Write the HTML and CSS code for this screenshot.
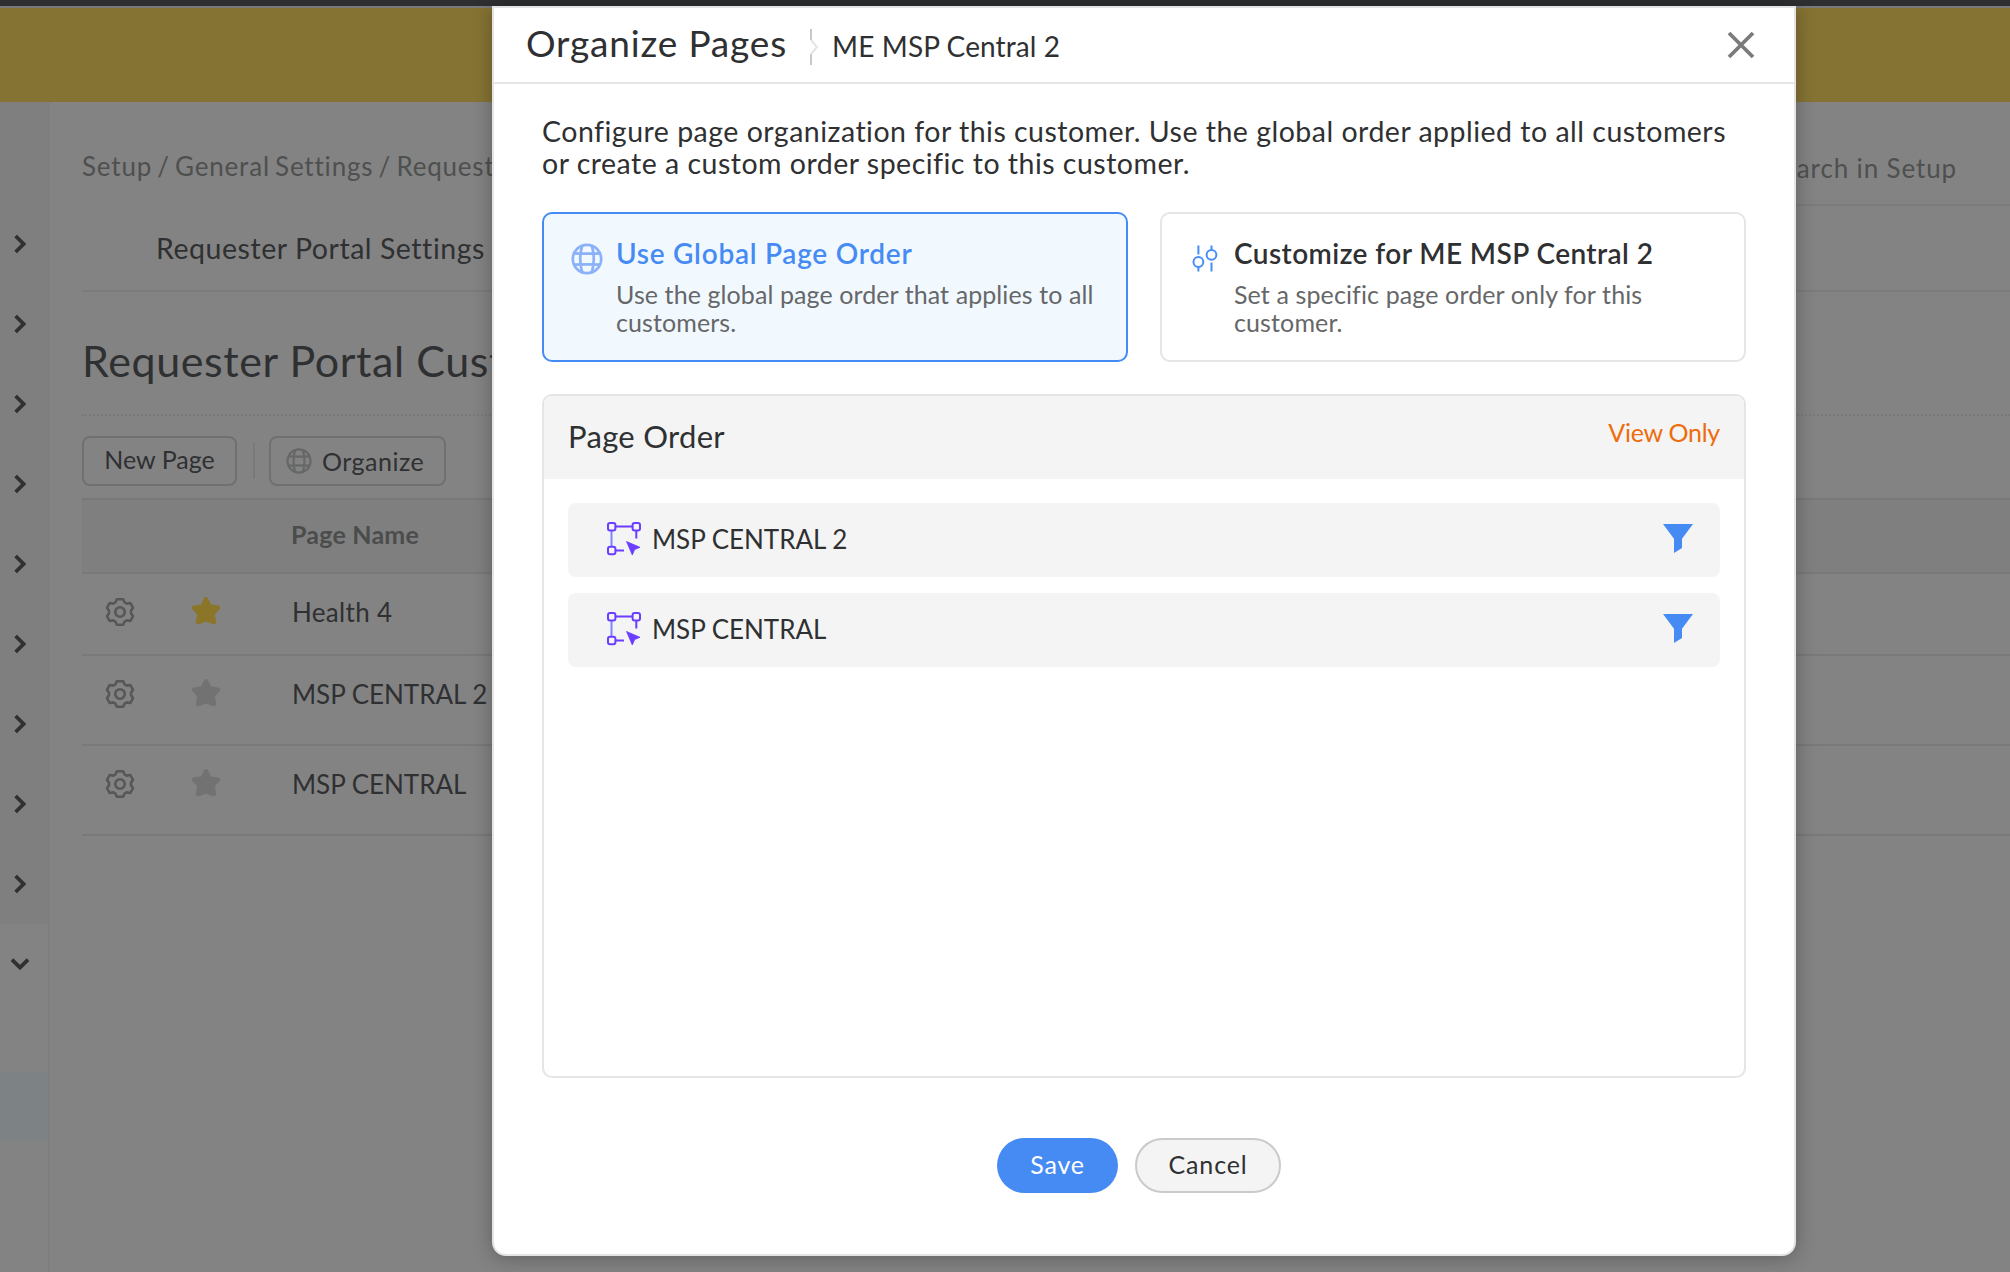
FILE: index.html
```html
<!DOCTYPE html>
<html lang="en">
<head>
<meta charset="utf-8">
<title>Organize Pages</title>
<link rel="stylesheet" href="styles.css">
</head>
<body>
<svg class="defs" width="0" height="0" aria-hidden="true">
  <symbol id="chev" viewBox="0 0 20 20"><path d="M5.6 2l8 8-8 8" fill="none" stroke="currentColor" stroke-width="3.8"/></symbol>
  <symbol id="globe" viewBox="-16 -16 32 32"><g fill="none" stroke="currentColor" stroke-width="2.7"><circle r="14.2"/><path d="M-4.6-14C-7.4-5-7.4 5-4.6 14M4.6-14C7.4-5 7.4 5 4.6 14M-13.4-5.6Q0-5 13.4-5.6M-13.4 5.6Q0 5 13.4 5.6"/></g></symbol>
  <symbol id="gear" viewBox="-15 -15 30 30"><g fill="none" stroke="currentColor" stroke-width="2.6" stroke-linejoin="round"><path d="M-3.2-12.8H3.2L4.6-9.6 6.8-8.4 10.4-9 13-4.2 11-1.2V1.2L13 4.2 10.4 9 6.8 8.4 4.6 9.6 3.2 12.8H-3.2L-4.6 9.6-6.8 8.4-10.4 9-13 4.2-11 1.2V-1.2L-13-4.2-10.4-9-6.8-8.4-4.6-9.6Z"/><circle r="4.8"/></g></symbol>
  <symbol id="star" viewBox="-15 -15 30 30"><path d="M0-11.6L3.4-4.6 11.8-3.2 6.4 2.6 7.8 11 0 8.2-7.8 11-6.4 2.6-11.8-3.2-3.4-4.6Z" fill="currentColor" stroke="currentColor" stroke-width="4.6" stroke-linejoin="round"/></symbol>
  <symbol id="nodes" viewBox="0 0 34 34"><g fill="none" stroke="#6a3dff" stroke-width="2"><path d="M4.5 9v15" stroke="#7d86ff"/><path d="M9 4.5h16M29.3 9v7.5M9 28.5h8"/><rect x="1" y="1" width="7.4" height="7.4" rx="2"/><rect x="25.6" y="1" width="7.4" height="7.4" rx="2"/><rect x="1" y="24.8" width="7.4" height="7.4" rx="2"/></g><path d="M19.5 19.5L33 25.3 27.6 27.6 25.3 33Z" fill="#6a3dff" stroke="#6a3dff" stroke-width=".8" stroke-linejoin="round"/></symbol>
  <symbol id="filter" viewBox="0 0 30 29"><path d="M0 0H30L19 14.7V24L11 29V14.7Z" fill="currentColor"/></symbol>
</svg>

<div class="strip"></div>
<header class="banner"></header>

<div class="page">
  <nav class="side">
    <div class="side-top">
      <span><svg><use href="#chev"/></svg></span><span><svg><use href="#chev"/></svg></span><span><svg><use href="#chev"/></svg></span>
      <span><svg><use href="#chev"/></svg></span><span><svg><use href="#chev"/></svg></span><span><svg><use href="#chev"/></svg></span>
      <span><svg><use href="#chev"/></svg></span><span><svg><use href="#chev"/></svg></span><span><svg><use href="#chev"/></svg></span>
    </div>
    <div class="side-open">
      <span class="open"><svg><use href="#chev"/></svg></span>
      <div class="current"></div>
    </div>
  </nav>

  <main class="main">
    <div class="topline">
      <div class="crumbs">Setup / General Settings / Requester</div>
      <div class="search">Search in Setup</div>
    </div>
    <div class="tabs">Requester Portal Settings</div>
    <h1 class="title">Requester Portal Customization</h1>
    <div class="tools">
      <button class="btn new">New Page</button>
      <i class="bar"></i>
      <button class="btn org"><svg><use href="#globe"/></svg>Organize</button>
    </div>
    <div class="row head"><span></span><span></span><span>Page Name</span></div>
    <div class="row first"><svg class="gear"><use href="#gear"/></svg><svg class="star on"><use href="#star"/></svg><span>Health 4</span></div>
    <div class="row"><svg class="gear"><use href="#gear"/></svg><svg class="star"><use href="#star"/></svg><span>MSP CENTRAL 2</span></div>
    <div class="row"><svg class="gear"><use href="#gear"/></svg><svg class="star"><use href="#star"/></svg><span>MSP CENTRAL</span></div>
  </main>
</div>

<section class="modal">
  <div class="m-head">
    <h2>Organize Pages</h2>
    <svg class="sep" viewBox="0 0 10 36"><path d="M2 0v11M2 25v11" stroke="#c8c8cc" stroke-width="2"/><path d="M2 11l6 7-6 7" fill="none" stroke="#e4e4e6" stroke-width="2"/></svg>
    <span class="who">ME MSP Central 2</span>
    <svg class="close" viewBox="0 0 28 28"><path d="M2 2l24 24M26 2L2 26" stroke="#7b7b7b" stroke-width="3.8"/></svg>
  </div>
  <div class="m-body">
    <p class="intro">Configure page organization for this customer. Use the global order applied to all customers<br>or create a custom order specific to this customer.</p>
    <div class="cards">
      <div class="card on">
        <svg class="ic"><use href="#globe"/></svg>
        <div><h3>Use Global Page Order</h3><p>Use the global page order that applies to all customers.</p></div>
      </div>
      <div class="card custom">
        <svg class="ic" viewBox="-16 -16 32 32"><g fill="none" stroke="#478ef7" stroke-width="2"><path d="M-6.6-13.5V-4.5M-6.6 8.3V12.5M6.5-13.5V-9.3M6.5 3.5V12.5"/><circle cx="-6.6" cy="3" r="4.9"/><circle cx="6.5" cy="-4.2" r="4.9"/></g></svg>
        <div><h3>Customize for ME MSP Central 2</h3><p>Set a specific page order only for this customer.</p></div>
      </div>
    </div>
    <div class="panel">
      <div class="p-head"><h3>Page Order</h3><span>View Only</span></div>
      <div class="p-list">
        <div class="item"><svg class="nodes"><use href="#nodes"/></svg><span>MSP CENTRAL 2</span><svg class="filter"><use href="#filter"/></svg></div>
        <div class="item"><svg class="nodes"><use href="#nodes"/></svg><span>MSP CENTRAL</span><svg class="filter"><use href="#filter"/></svg></div>
      </div>
    </div>
    <div class="actions"><button class="save">Save</button><button class="cancel">Cancel</button></div>
  </div>
</section>
</body>
</html>
```

FILE: styles.css
```css
* { box-sizing: border-box; }
body {
  margin: 0;
  width: 2010px;
  height: 1272px;
  overflow: hidden;
  position: relative;
  background: #838383;
  color: #2f3032;
  font-family: Lato, "Liberation Sans", sans-serif;
}
h1, h2, h3, p { margin: 0; font-weight: 400; }
button { font: inherit; color: inherit; background: none; padding: 0; }
svg { display: block; flex: none; }
.defs { position: absolute; }

.strip { height: 6px; background: #2e2f31; }
.banner { height: 96px; background: #857333; border-top: 2px solid #7b7a7d; }

.page { display: flex; height: 1170px; }

/* Sidebar */
.side { width: 50px; flex: none; display: flex; flex-direction: column; }
.side-top { background: #7f7f7f; padding-top: 102px; }
.side span { display: flex; align-items: center; height: 80px; padding-left: 10px; }
.side svg { width: 20px; height: 20px; }
.side-open { flex: 1; border-right: 2px solid #7f7f7f; }
.side .open svg { transform: rotate(90deg); }
.current { height: 68px; margin-top: 68px; background: #7d8285; }

/* Main */
.main { flex: 1; min-width: 0; padding-left: 32px; white-space: nowrap; }
.topline { display: flex; justify-content: space-between; height: 104px; font-size: 26px; line-height: 32px; color: #4e504f; }
.crumbs { width: 412px; overflow: hidden; padding-top: 48px; letter-spacing: .8px; word-spacing: -2.2px; }
.search { width: 320px; padding: 50px 53px 0 0; text-align: right; letter-spacing: .87px; border-bottom: 2px solid #7b7b7b; }
.tabs { height: 86px; line-height: 84px; padding-left: 74px; font-size: 28.5px; letter-spacing: .54px; border-bottom: 2px solid #7b7b7b; }
.title { height: 124px; line-height: 106px; padding-top: 16px; font-size: 43px; letter-spacing: .6px; border-bottom: 2px dotted #797979; }
.tools { display: flex; height: 82px; padding: 20px 0 12px; font-size: 25px; }
.btn { height: 50px; border: 2px solid #707070; border-radius: 8px; }
.new { width: 155px; line-height: 42px; padding-bottom: 4px; letter-spacing: .05px; }
.bar { width: 2px; height: 36px; margin: 7px 14px 0 16px; background: #797979; }
.org { width: 177px; display: flex; align-items: center; padding-left: 15px; letter-spacing: .5px; }
.org svg { width: 26px; height: 26px; margin-right: 10px; color: #666768; }

.row { display: grid; grid-template-columns: 76px 86px 1fr; height: 90px; padding-top: 22px; font-size: 26px; line-height: 32px; letter-spacing: -.03px; border-bottom: 2px solid #797979; }
.row span { padding-left: 48px; }
.first { height: 82px; letter-spacing: .33px; }
.head { height: 76px; padding-top: 18px; background: #7f7f7f; border-top: 2px solid #787878; font-size: 25px; font-weight: 700; letter-spacing: .22px; color: #4b4d4c; }
.head span { padding-left: 47px; }
.gear { width: 30px; height: 30px; margin: 1px 0 0 23px; color: #565757; }
.star { width: 30px; height: 30px; margin: 0 0 0 33px; color: #727272; }
.on.star { color: #8a7528; }

/* Modal */
.modal {
  position: absolute;
  left: 492px;
  top: 6px;
  width: 1304px;
  height: 1250px;
  background: #fff;
  border: 2px solid #e4e4e4;
  border-radius: 0 0 14px 14px;
  box-shadow: 0 2px 20px rgba(0, 0, 0, .28);
}
.m-head { display: flex; align-items: center; height: 76px; padding: 0 39px 0 32px; border-bottom: 2px solid #e5e5e5; }
.m-head h2 { font-size: 37px; line-height: 44px; padding-bottom: 4px; letter-spacing: .84px; }
.sep { width: 10px; height: 36px; margin: 4px 0 0 22px; }
.who { font-size: 28px; line-height: 34px; padding-top: 2px; margin-left: 13px; letter-spacing: .11px; }
.close { width: 28px; height: 28px; margin-left: auto; }

.m-body { padding: 31px 48px 0; }
.intro { font-size: 28.5px; line-height: 32px; letter-spacing: .49px; white-space: nowrap; margin-bottom: 33px; }
.cards { display: grid; grid-template-columns: 1fr 1fr; gap: 32px; }
.card { display: flex; height: 150px; padding: 22px 26px 0 27px; border: 2px solid #e5e5e5; border-radius: 10px; }
.card h3 { font-size: 28px; line-height: 34px; font-weight: 600; letter-spacing: .43px; margin-bottom: 11px; white-space: nowrap; }
.card p { font-size: 25px; line-height: 27.5px; letter-spacing: .09px; color: #666769; }
.card.on { background: #f1f9ff; border-color: #468bf3; }
.card.on h3 { color: #468bf3; letter-spacing: .74px; }
.ic { width: 32px; height: 32px; margin: 7px 13px 0 0; color: #8bb2f8; }
.custom p { width: 440px; letter-spacing: .12px; }

.panel { height: 684px; margin-top: 32px; border: 2px solid #e5e5e5; border-radius: 10px; overflow: hidden; }
.p-head { display: flex; justify-content: space-between; height: 83px; padding: 0 24px; background: #f4f4f4; }
.p-head h3 { font-size: 31px; line-height: 80px; letter-spacing: .3px; }
.p-head span { font-size: 25px; line-height: 72px; letter-spacing: -.25px; color: #ee6c0b; }
.p-list { display: grid; gap: 16px; padding: 24px; }
.item { display: flex; align-items: center; height: 74px; padding: 0 27px 3px 39px; background: #f4f4f4; border-radius: 8px; font-size: 26px; letter-spacing: -.03px; }
.nodes { width: 34px; height: 34px; margin-right: 11px; }
.filter { width: 30px; height: 29px; margin-left: auto; color: #468bf3; }

.actions { display: flex; gap: 17px; margin: 60px 0 0 455px; font-size: 25px; }
.actions button { height: 55px; padding-bottom: 3px; border-radius: 28px; letter-spacing: .85px; }
.save { width: 121px; border: 0; background: #468bf3; color: #fff; }
.cancel { width: 146px; border: 2px solid #cacacc; background: #f4f4f4; }
```
